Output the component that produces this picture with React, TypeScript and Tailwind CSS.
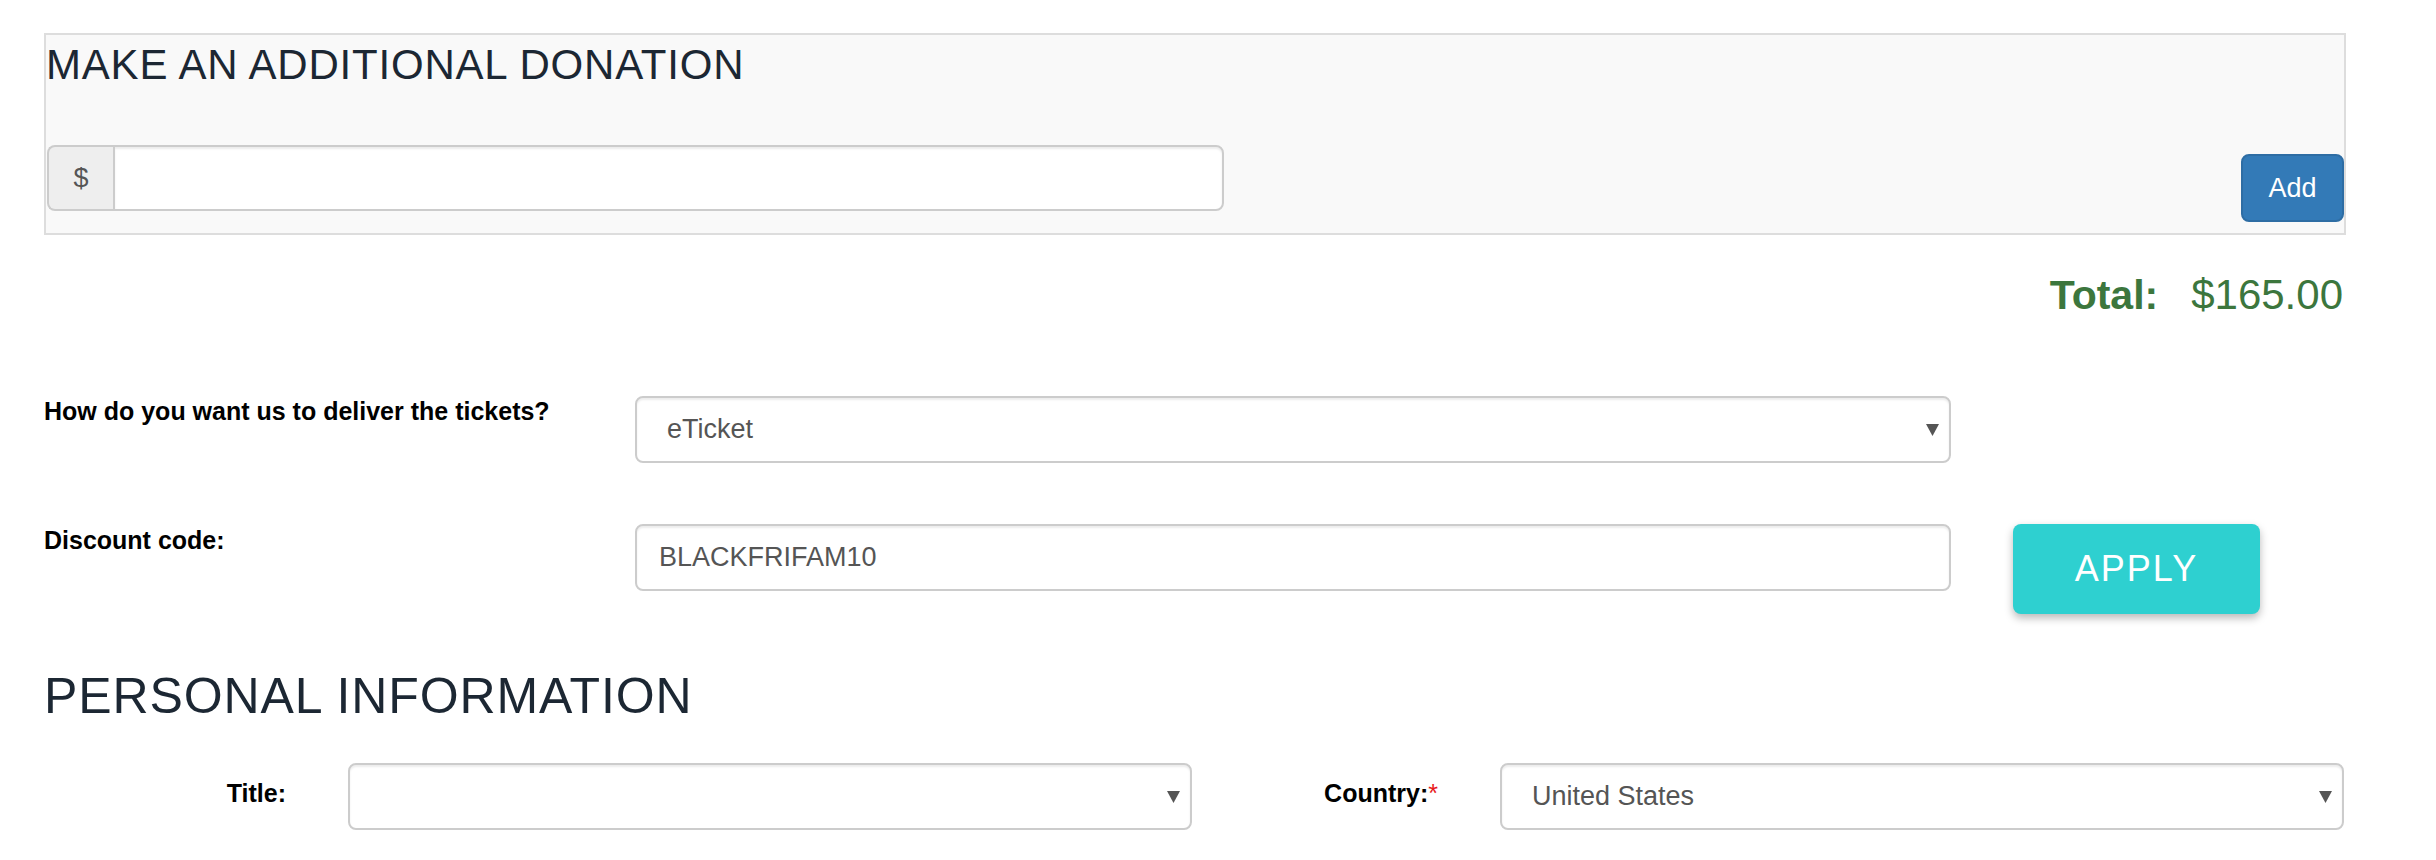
import React from "react";

function Arrow() {
  return (
    <svg width="13" height="12" viewBox="0 0 13 12" className="shrink-0">
      <polygon points="0,0 13,0 6.5,12" fill="#555555" />
    </svg>
  );
}

function FakeSelect({ value, width }: { value: string; width: string }) {
  return (
    <div
      className={`${width} h-[67px] shrink-0 flex items-center justify-between border-2 border-[#cccccc] rounded-[8px] bg-white shadow-[inset_0_2px_2px_rgba(0,0,0,0.075)] pl-[30px] pr-[10px] text-[27px] text-[#555555]`}
    >
      <span className="leading-[31px]">{value}</span>
      <Arrow />
    </div>
  );
}

export default function App() {
  return (
    <div className="w-[2436px] h-[860px] overflow-hidden bg-white font-['Liberation_Sans',Arial,sans-serif]">
      <div className="ml-[44px] w-[2302px] pt-[33px]">
        {/* Donation box */}
        <div className="h-[202px] border-2 border-[#dddddd] bg-[#f9f9f9]">
          <h3 className="pt-[7px] text-[42px] leading-[46px] font-normal tracking-[0.8px] text-[#1c2733]">
            MAKE AN ADDITIONAL DONATION
          </h3>
          <div className="mt-[57px] flex items-start justify-between">
            <div className="ml-[1px] flex h-[66px] w-[1177px]">
              <div className="flex w-[66px] items-center justify-center rounded-l-[8px] border-2 border-r-0 border-[#cccccc] bg-[#eeeeee] text-[27px] text-[#555555]">
                $
              </div>
              <div className="flex-1 rounded-r-[8px] border-2 border-[#cccccc] bg-white shadow-[inset_0_2px_2px_rgba(0,0,0,0.075)]" />
            </div>
            <div className="mt-[9px] flex h-[68px] w-[103px] items-center justify-center rounded-[8px] border-2 border-[#2e6da4] bg-[#337ab7] text-[27px] text-white">
              Add
            </div>
          </div>
        </div>

        {/* Total */}
        <div className="mt-[37px] flex justify-end gap-[33px] pr-[3px] text-[41px] leading-[46px] text-[#3c763d]">
          <span className="font-bold">Total:</span>
          <span className="text-[42px]">$165.00</span>
        </div>

        {/* Delivery row */}
        <div className="mt-[75px] flex items-start">
          <div className="w-[591px] shrink-0 text-[25px] leading-[36px] font-bold text-black">
            How do you want us to deliver the tickets?
          </div>
          <div className="mt-[3px]">
            <FakeSelect value="eTicket" width="w-[1316px]" />
          </div>
        </div>

        {/* Discount row */}
        <div className="mt-[59px] flex items-start">
          <div className="w-[591px] shrink-0 text-[25px] leading-[36px] font-bold text-black">
            Discount code:
          </div>
          <div className="mt-[2px] flex h-[67px] w-[1316px] shrink-0 items-center rounded-[8px] border-2 border-[#cccccc] bg-white pl-[22px] text-[27px] text-[#555555] shadow-[inset_0_2px_2px_rgba(0,0,0,0.075)]">
            <span className="leading-[31px]">BLACKFRIFAM10</span>
          </div>
          <div className="ml-[62px] mt-[2px] flex h-[90px] w-[247px] shrink-0 items-center justify-center rounded-[8px] bg-[#2ed0d0] text-[36px] tracking-[2px] text-white shadow-[0_4px_8px_rgba(0,0,0,0.28)]">
            APPLY
          </div>
        </div>

        {/* Personal information */}
        <h2 className="mt-[55px] text-[50px] leading-[55px] font-normal tracking-[0.9px] text-[#1c2733]">
          PERSONAL INFORMATION
        </h2>

        <div className="mt-[39px] flex">
          <div className="flex w-[1152px] shrink-0 items-start">
            <div className="mt-[12px] w-[242px] shrink-0 text-right text-[25px] leading-[36px] font-bold text-black">
              Title:
            </div>
            <div className="ml-[62px]">
              <FakeSelect value="" width="w-[844px]" />
            </div>
          </div>
          <div className="flex w-[1150px] shrink-0 items-start">
            <div className="mt-[12px] w-[242px] shrink-0 text-right text-[25px] leading-[36px] font-bold text-black">
              Country:<span className="font-normal text-[#e8191b]">*</span>
            </div>
            <div className="ml-[62px]">
              <FakeSelect value="United States" width="w-[844px]" />
            </div>
          </div>
        </div>
      </div>
    </div>
  );
}
